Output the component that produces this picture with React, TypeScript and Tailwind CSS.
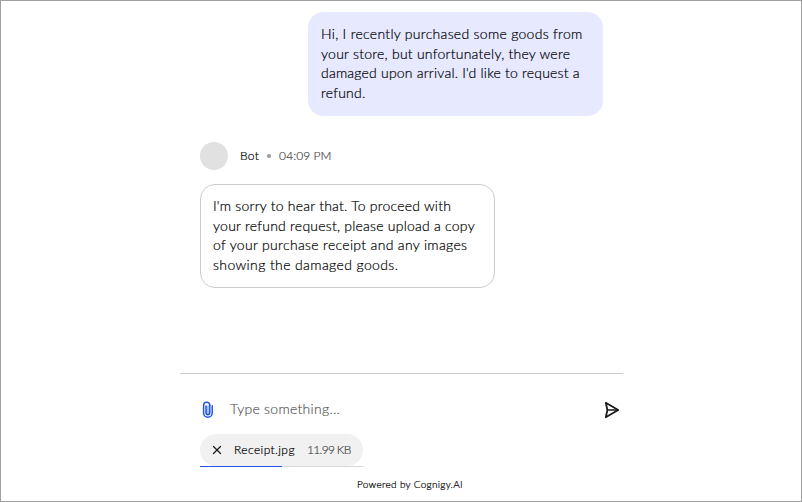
import { X } from "lucide-react";

type Line = { text: string; tracking: string };

const userLines: Line[] = [
  { text: "Hi, I recently purchased some goods from", tracking: "tracking-[0.29px]" },
  { text: "your store, but unfortunately, they were", tracking: "tracking-[0.24px]" },
  { text: "damaged upon arrival. I'd like to request a", tracking: "tracking-[0.2px]" },
  { text: "refund.", tracking: "tracking-[0.2px]" },
];

const botLines: Line[] = [
  { text: "I'm sorry to hear that. To proceed with", tracking: "tracking-[0.22px]" },
  { text: "your refund request, please upload a copy", tracking: "tracking-[0.23px]" },
  { text: "of your purchase receipt and any images", tracking: "tracking-[0.32px]" },
  { text: "showing the damaged goods.", tracking: "tracking-[0.38px]" },
];

function Message({ lines, className }: { lines: Line[]; className: string }) {
  return (
    <div className={`h-[104px] w-[295px] rounded-[15px] border px-3 pt-[11px] text-[14px] leading-[19.6px] text-black ${className}`}>
      {lines.map((l) => (
        <div key={l.text} className={`whitespace-nowrap ${l.tracking}`}>{l.text}</div>
      ))}
    </div>
  );
}

function Clip() {
  return (
    <svg width="12" height="18" viewBox="0 0 12 18" fill="none" stroke="#2455e6" strokeWidth="1.5" strokeLinecap="round">
      <path d="M7.8 4.3v7.5a1.9 1.9 0 0 1-3.8 0V5" fill="#a9bdf7" />
      <path d="M10.2 4.8v7.2a4.3 4.3 0 0 1-8.6 0V4.3a3.1 3.1 0 0 1 6.2 0" />
    </svg>
  );
}

function Send() {
  return (
    <svg width="16" height="18" viewBox="0 0 16 18" fill="none" stroke="#1a1a1a" strokeWidth="1.8" strokeLinejoin="round">
      <path d="M1.8 1.8 14.2 9 1.8 16.2 3.4 9Z" />
      <path d="M3.4 9H13" strokeWidth="1.5" />
    </svg>
  );
}

export default function App() {
  return (
    <div className="h-[502px] w-[802px] overflow-hidden border border-[#a0a0a0] bg-white font-['Lato',sans-serif] font-light [-webkit-text-stroke:0.2px]">
      <main className="ml-[179px] flex h-full w-[443px] flex-col">
        <section className="flex h-[372px] flex-col px-5 pt-[11px]">
          <Message lines={userLines} className="self-end border-[#e6e9ff] bg-[#e6e9ff]" />
          <div className="mt-[26px] flex h-7 items-center text-[12px] text-black">
            <span className="size-7 rounded-full bg-[#e1e1e1]" />
            <span className="ml-3 tracking-[0.3px]">Bot</span>
            <span className="ml-2 size-1 rounded-full bg-[#999]" />
            <span className="ml-2 tracking-[0.08px] text-[#484848]">04:09 PM</span>
          </div>
          <Message lines={botLines} className="mt-[14px] border-[#ccc] bg-white" />
        </section>
        <footer className="flex flex-1 flex-col border-t border-[#ccc]">
          <div className="mt-[26px] flex h-5 items-center pl-[22px] pr-[3px]">
            <Clip />
            <span className="mb-[3px] ml-4 text-[14px] tracking-[0.28px] text-[#5c5c5c]">Type something...</span>
            <span className="ml-auto"><Send /></span>
          </div>
          <div className="ml-5 mt-[14px] w-[163px]">
            <div className="flex h-8 items-center rounded-[16px] bg-[#f1f1f1] text-[12px]">
              <X className="ml-[10px] size-[14px] text-[#1a1a1a]" strokeWidth={2.2} />
              <span className="ml-[10px] w-[62px] tracking-[0.4px] text-black">Receipt.jpg</span>
              <span className="ml-[11px] tracking-[-0.68px] text-[#484848]">11.99 KB</span>
            </div>
            <div className="h-px bg-[#d8d8d8]"><div className="h-px w-[82px] bg-[#2455e6]" /></div>
          </div>
          <div className="mt-[9px] pl-[177px] text-[10px] leading-4 tracking-[0.3px] text-black">Powered by Cognigy.AI</div>
        </footer>
      </main>
    </div>
  );
}
